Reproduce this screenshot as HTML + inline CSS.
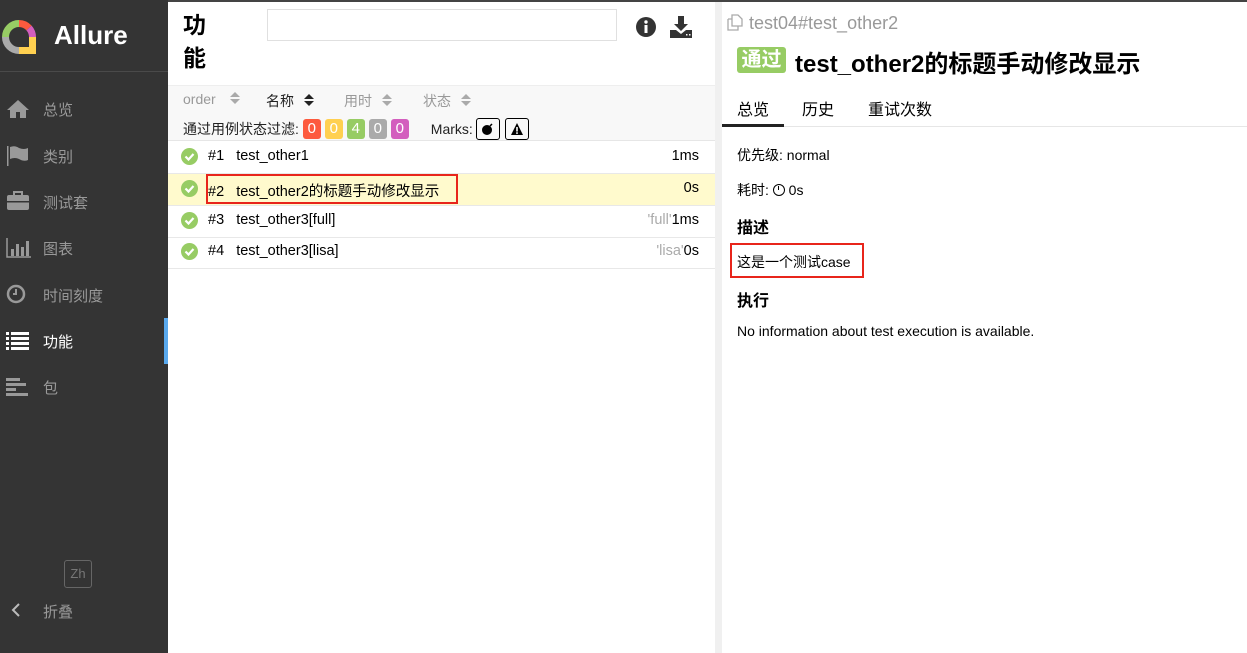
<!DOCTYPE html>
<html><head><meta charset="utf-8"><style>
*{box-sizing:border-box;margin:0;padding:0}
body{width:1247px;height:653px;overflow:hidden;font-family:"Liberation Sans","Noto Sans CJK SC",sans-serif;background:#fff;position:relative;color:#000}
.abs{position:absolute}
#side{left:0;top:0;width:168px;height:653px;background:#343434}
#side .logo{left:0;top:0;width:168px;height:72px;border-bottom:1px solid #4a4a4a}
.nav{position:absolute;left:0;width:168px;height:46px;color:#999;font-size:15px}
.nav span{position:absolute;left:43px;top:13px}
.nav svg{position:absolute;left:6px;top:12px}
#mid{left:168px;top:0;width:547px;height:653px;border-top:2px solid #444}
#split{left:715px;top:0;width:7px;height:653px;background:#f0f0f0;border-top:2px solid #444}
#right{left:722px;top:0;width:525px;height:653px;border-top:2px solid #444}
.badge{display:inline-block;width:18px;height:20px;border-radius:3px;color:#fff;text-align:center;line-height:20px;font-size:15px;margin-right:4px}
.row{position:absolute;left:0;width:547px;height:32px;border-bottom:1px solid #e8e8e8;font-size:14.5px}
.row .ck{position:absolute;left:13px;top:6px}
.row .t{position:absolute;left:40px;top:6px}
.row .d{position:absolute;right:16px;top:6px}
.sort{display:inline-block;position:relative;width:10px;height:14px;vertical-align:-2px;margin-left:10px}
.sort:before{content:"";position:absolute;left:0;top:0;border:5px solid transparent;border-bottom:5px solid currentColor;border-top:0}
.sort:after{content:"";position:absolute;left:0;top:7px;border:5px solid transparent;border-top:5px solid currentColor;border-bottom:0}
</style></head><body>
<div id="side" class="abs">
 <div class="logo abs">
  <svg class="abs" style="left:1px;top:19px" width="36" height="36" viewBox="0 0 36 36">
   <path d="M18 4.5 A13.5 13.5 0 0 0 4.5 18" stroke="#97cc64" stroke-width="7" fill="none"/>
   <path d="M4.5 18 A13.5 13.5 0 0 0 18 31.5" stroke="#aaa" stroke-width="7" fill="none"/>
   <path d="M18 4.5 A13.5 13.5 0 0 1 28 9" stroke="#fd5a3e" stroke-width="7" fill="none"/>
   <path d="M28 9 A13.5 13.5 0 0 1 31.5 18" stroke="#d35ebe" stroke-width="7" fill="none"/>
   <path d="M18 31.5 L31.5 31.5 L31.5 18" stroke="#ffd050" stroke-width="7" fill="none"/>
  </svg>
  <div class="abs" style="left:54px;top:20px;color:#fff;font-weight:bold;font-size:26px">Allure</div>
 </div>
 <div class="nav" style="top:86px"><svg width="24" height="22" viewBox="0 0 24 22"><path d="M12 2 L1 12 H4 V20 H10 V14 H14 V20 H20 V12 H23 Z" fill="#999"/></svg><span>总览</span></div>
 <div class="nav" style="top:133px"><svg width="24" height="22" viewBox="0 0 24 22"><rect x="1" y="1" width="1.5" height="20" fill="#999"/><path d="M4 2 Q9 0 13 3 Q18 5 22 3 V15 Q18 17 13 14 Q9 12 4 14Z" fill="#999"/></svg><span>类别</span></div>
 <div class="nav" style="top:179px"><svg width="24" height="20" viewBox="0 0 24 20"><rect x="1" y="4" width="22" height="15" rx="2" fill="#999"/><rect x="8" y="1" width="8" height="4" fill="none" stroke="#999" stroke-width="2"/><rect x="1" y="10" width="22" height="1.5" fill="#343434"/></svg><span>测试套</span></div>
 <div class="nav" style="top:225px"><svg width="26" height="22" viewBox="0 0 26 22"><path d="M1 1 V20 H25" stroke="#999" stroke-width="1.5" fill="none"/><rect x="5" y="12" width="3" height="7" fill="#999"/><rect x="10" y="7" width="3" height="12" fill="#999"/><rect x="15" y="10" width="3" height="9" fill="#999"/><rect x="20" y="4" width="3" height="15" fill="#999"/></svg><span>图表</span></div>
 <div class="nav" style="top:272px"><svg width="22" height="22" viewBox="0 0 22 22"><circle cx="10" cy="10" r="8" stroke="#999" stroke-width="2.5" fill="none"/><path d="M10 5 V10 H7" stroke="#999" stroke-width="2" fill="none"/></svg><span>时间刻度</span></div>
 <div class="nav" style="top:318px;color:#fff"><svg width="24" height="20" viewBox="0 0 24 20"><g fill="#fff"><rect x="0" y="2" width="3" height="3"/><rect x="5" y="2" width="18" height="3"/><rect x="0" y="7" width="3" height="3"/><rect x="5" y="7" width="18" height="3"/><rect x="0" y="12" width="3" height="3"/><rect x="5" y="12" width="18" height="3"/><rect x="0" y="17" width="3" height="3"/><rect x="5" y="17" width="18" height="3"/></g></svg><span>功能</span><div class="abs" style="right:0;top:0;width:4px;height:46px;background:#59a9ee"></div></div>
 <div class="nav" style="top:364px"><svg width="24" height="22" viewBox="0 0 24 22"><g fill="#999"><rect x="0" y="2" width="14" height="3"/><rect x="0" y="7" width="20" height="3"/><rect x="0" y="12" width="10" height="3"/><rect x="0" y="17" width="22" height="3"/></g></svg><span>包</span></div>
 <div class="abs" style="left:64px;top:560px;width:28px;height:28px;border:1px solid #666;border-radius:3px;color:#777;font-size:13px;text-align:center;line-height:26px">Zh</div>
 <svg class="abs" style="left:11px;top:603px" width="10" height="14" viewBox="0 0 10 14"><path d="M8 1 L2 7 L8 13" stroke="#bbb" stroke-width="2" fill="none"/></svg>
 <div class="abs" style="left:43px;top:601px;color:#999;font-size:15px">折叠</div>
</div>

<div id="mid" class="abs">
 <div class="abs" style="left:15px;top:7px;font-size:23px;font-weight:bold;line-height:33px">功<br>能</div>
 <div class="abs" style="left:99px;top:7px;width:350px;height:32px;border:1px solid #e0e0e0"></div>
 <svg class="abs" style="left:467px;top:14px" width="22" height="22" viewBox="0 0 22 22"><circle cx="11" cy="11" r="10" fill="#333"/><rect x="9.5" y="9" width="3" height="8" fill="#fff"/><circle cx="11" cy="6" r="1.7" fill="#fff"/></svg>
 <svg class="abs" style="left:501px;top:13px" width="24" height="24" viewBox="0 0 24 24"><path d="M9 1 H15 V9 H19 L12 16 L5 9 H9Z" fill="#333"/><path d="M1 15 H7 L12 19 L17 15 H23 V23 H1Z" fill="#333"/><rect x="17" y="19" width="1.5" height="1.5" fill="#fff"/><rect x="20" y="19" width="1.5" height="1.5" fill="#fff"/></svg>
 <div class="abs" style="left:0;top:83px;width:547px;height:56px;background:#f8f8f8;border-top:1px solid #eee;border-bottom:1px solid #e6e6e6"></div>
 <div class="abs" style="left:15px;top:89px;font-size:14px;color:#999">order<span class="sort" style="color:#aaa;margin-left:14px"></span></div>
 <div class="abs" style="left:98px;top:89px;font-size:14px;color:#222">名称<span class="sort"></span></div>
 <div class="abs" style="left:176px;top:89px;font-size:14px;color:#999">用时<span class="sort" style="color:#aaa"></span></div>
 <div class="abs" style="left:255px;top:89px;font-size:14px;color:#999">状态<span class="sort" style="color:#aaa"></span></div>
 <div class="abs" style="left:15px;top:116px;font-size:14px;color:#222;display:flex;align-items:center">通过用例状态过滤:&nbsp;<span class="badge" style="background:#fd5a3e">0</span><span class="badge" style="background:#ffd050">0</span><span class="badge" style="background:#97cc64">4</span><span class="badge" style="background:#aaa">0</span><span class="badge" style="background:#d35ebe">0</span>
  <span style="margin-left:18px">Marks:</span>
  <span style="display:inline-block;width:24px;height:22px;border:1.5px solid #000;border-radius:3px;margin-left:3px;position:relative"><svg class="abs" style="left:4px;top:3px" width="14" height="14" viewBox="0 0 14 14"><circle cx="6" cy="8" r="5" fill="#000"/><path d="M9 4 L11 2" stroke="#000" stroke-width="1.5"/></svg></span>
  <span style="display:inline-block;width:24px;height:22px;border:1.5px solid #000;border-radius:3px;margin-left:5px;position:relative"><svg class="abs" style="left:4px;top:3px" width="14" height="14" viewBox="0 0 14 14"><path d="M7 1 L13 13 H1Z" fill="#000"/><rect x="6.2" y="5" width="1.6" height="4.5" fill="#fff"/><rect x="6.2" y="10.3" width="1.6" height="1.6" fill="#fff"/></svg></span></div>
 <div class="row" style="top:140px"><svg class="ck" width="17" height="17"><circle cx="8.5" cy="8.5" r="8.5" fill="#97cc64"/><path d="M4.5 8.5 L7.5 11.5 L12.5 6" stroke="#fff" stroke-width="2.2" fill="none"/></svg><span class="t">#1&nbsp;&nbsp;&nbsp;test_other1</span><span class="d">1ms</span></div>
 <div class="row" style="top:172px;background:#fffacd"><svg class="ck" width="17" height="17"><circle cx="8.5" cy="8.5" r="8.5" fill="#97cc64"/><path d="M4.5 8.5 L7.5 11.5 L12.5 6" stroke="#fff" stroke-width="2.2" fill="none"/></svg><span class="t">#2&nbsp;&nbsp;&nbsp;test_other2的标题手动修改显示</span><span class="d">0s</span><div class="abs" style="left:38px;top:0;width:252px;height:30px;border:2px solid #e8251b"></div></div>
 <div class="row" style="top:204px"><svg class="ck" width="17" height="17"><circle cx="8.5" cy="8.5" r="8.5" fill="#97cc64"/><path d="M4.5 8.5 L7.5 11.5 L12.5 6" stroke="#fff" stroke-width="2.2" fill="none"/></svg><span class="t">#3&nbsp;&nbsp;&nbsp;test_other3[full]</span><span class="d"><span style="color:#aaa">'full'</span>1ms</span></div>
 <div class="row" style="top:235px"><svg class="ck" width="17" height="17"><circle cx="8.5" cy="8.5" r="8.5" fill="#97cc64"/><path d="M4.5 8.5 L7.5 11.5 L12.5 6" stroke="#fff" stroke-width="2.2" fill="none"/></svg><span class="t">#4&nbsp;&nbsp;&nbsp;test_other3[lisa]</span><span class="d"><span style="color:#aaa">'lisa'</span>0s</span></div>
</div>
<div id="split" class="abs"></div>
<div id="right" class="abs">
 <svg class="abs" style="left:5px;top:12px" width="16" height="17" viewBox="0 0 16 17"><path d="M5 1 H11 L15 5 V12 H5Z M1 5 H5 M1 5 V16 H11 V12" stroke="#aaa" stroke-width="1.3" fill="none"/></svg>
 <div class="abs" style="left:27px;top:11px;font-size:18px;color:#999">test04#test_other2</div>
 <div class="abs" style="left:15px;top:45px;width:49px;height:26px;background:#97cc64;border-radius:3px;color:#fff;font-size:20px;font-weight:bold;text-align:center;line-height:26px">通过</div>
 <div class="abs" style="left:73px;top:42px;font-size:24px;font-weight:bold">test_other2的标题手动修改显示</div>
 <div class="abs" style="left:0;top:124px;width:525px;height:1px;background:#e6e6e6"></div>
 <div class="abs" style="left:0;top:122px;width:62px;height:3px;background:#222"></div>
 <div class="abs" style="left:15px;top:94px;font-size:16px">总览</div>
 <div class="abs" style="left:80px;top:94px;font-size:16px">历史</div>
 <div class="abs" style="left:146px;top:94px;font-size:16px">重试次数</div>
 <div class="abs" style="left:15px;top:143px;font-size:14px">优先级: normal</div>
 <div class="abs" style="left:15px;top:178px;font-size:14px">耗时: <span style="display:inline-block;width:12px;height:12px;border:1.5px solid #000;border-radius:50%;vertical-align:-1px;position:relative"><span style="position:absolute;left:4px;top:1px;width:1.5px;height:4px;background:#000"></span></span> 0s</div>
 <div class="abs" style="left:15px;top:212px;font-size:16px;font-weight:bold">描述</div>
 <div class="abs" style="left:8px;top:241px;width:134px;height:35px;border:2px solid #e8251b"></div>
 <div class="abs" style="left:15px;top:250px;font-size:14px">这是一个测试case</div>
 <div class="abs" style="left:15px;top:285px;font-size:16px;font-weight:bold">执行</div>
 <div class="abs" style="left:15px;top:321px;font-size:14px">No information about test execution is available.</div>
</div>
</body></html>
